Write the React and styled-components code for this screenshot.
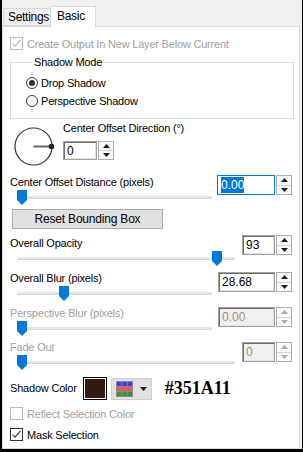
import styled, { createGlobalStyle } from 'styled-components';

const GlobalStyle = createGlobalStyle`
  html, body {
    margin: 0;
    padding: 0;
    background: #fff;
  }
  body {
    font-family: "Liberation Sans", Arial, sans-serif;
    font-size: 11px;
    letter-spacing: -0.2px;
    color: #000;
  }
  * {
    box-sizing: border-box;
  }
`;

const Frame = styled.div`
  width: 303px;
  height: 452px;
  background: #f0f0f0;
  border-left: 2px solid #000;
  border-right: 1px solid #000;
  border-bottom: 3px solid #000;
  display: flex;
  flex-direction: column;
`;

const TabStrip = styled.div`
  height: 26px;
  display: flex;
  align-items: flex-end;
  padding-left: 1px;
  position: relative;
  z-index: 1;
`;

const Tab = styled.div`
  width: ${(p) => (p.active ? 46 : 48)}px;
  height: ${(p) => (p.active ? 21 : 18)}px;
  margin-left: ${(p) => (p.active ? '-1px' : '0')};
  margin-bottom: ${(p) => (p.active ? '-1px' : '0')};
  padding-left: ${(p) => (p.active ? 6 : 4)}px;
  padding-bottom: ${(p) => (p.active ? 3 : 1)}px;
  background: ${(p) => (p.active ? '#fff' : '#f0f0f0')};
  border: 1px solid #d9d9d9;
  border-bottom: ${(p) => (p.active ? 'none' : '1px solid #d9d9d9')};
  display: flex;
  align-items: center;
  font-size: 12px;
  letter-spacing: -0.3px;
`;

const Panel = styled.div`
  flex: 1;
  margin-right: 2px;
  background: #fff;
  border: 1px solid #d9d9d9;
  padding: 10px 7px 0 7px;
  display: flex;
  flex-direction: column;
`;

const CheckRow = styled.label`
  display: flex;
  align-items: center;
  gap: 4px;
  height: 13px;
  margin-top: ${(p) => p.mt || 0}px;
  color: ${(p) => (p.disabled ? '#a0a0a0' : '#000')};
`;

const Box = styled.span`
  width: 13px;
  height: 13px;
  border: 1px solid ${(p) => (p.disabled ? '#bcbcbc' : '#333')};
  background: #fff;
  display: flex;
  align-items: center;
  justify-content: center;
`;

const Checkbox = ({ checked, disabled }) => (
  <Box disabled={disabled}>
    {checked && (
      <svg width="11" height="11" viewBox="0 0 11 11">
        <path
          d="M1.5 5.5 L4 8.2 L9.5 1.8"
          fill="none"
          stroke={disabled ? '#b4b4b4' : '#333'}
          strokeWidth="1.1"
        />
      </svg>
    )}
  </Box>
);

const Group = styled.fieldset`
  margin: 5px 0 0 0;
  width: 284px;
  padding: 4px 0 8px 15px;
  border: 1px solid #dcdcdc;
  border-radius: 0;
`;

const Legend = styled.legend`
  margin-left: 6px;
  padding: 0 2px;
  line-height: 15px;
`;

const RadioRow = styled.label`
  display: flex;
  align-items: center;
  gap: 3px;
  height: 18px;
`;

const RadioCircle = styled.span`
  width: 12px;
  height: 12px;
  border-radius: 50%;
  border: 1px solid #333;
  background: #fff;
  display: flex;
  align-items: center;
  justify-content: center;

  &::after {
    content: '';
    display: ${(p) => (p.checked ? 'block' : 'none')};
    width: 6px;
    height: 6px;
    border-radius: 50%;
    background: #333;
  }
`;

const DirectionRow = styled.div`
  display: flex;
  align-items: flex-start;
  margin-top: 2px;
`;

const Dial = styled.svg`
  margin: 6px 0 0 4px;
  flex-shrink: 0;
`;

const DirectionControls = styled.div`
  margin-left: 8px;
  display: flex;
  flex-direction: column;
  gap: 5px;
  padding-left: 1px;
`;

const Label = styled.div`
  line-height: 15px;
  white-space: nowrap;
  color: ${(p) => (p.disabled ? '#a0a0a0' : '#000')};
`;

const SpinWrap = styled.div`
  display: flex;
  height: ${(p) => p.h || 20}px;
  margin-top: ${(p) => p.dy || 0}px;
`;

const SpinField = styled.div`
  width: ${(p) => p.w}px;
  border: 1px solid ${(p) => (p.focused ? '#0078d7' : '#a0a0a0')};
  box-shadow: ${(p) => (p.focused ? 'none' : 'inset 1px 1px 0 #6d6d6d, inset -1px -1px 0 #e3e3e3')};
  background: ${(p) => (p.disabled ? '#f0f0f0' : '#fff')};
  color: ${(p) => (p.disabled ? '#9c8f84' : '#000')};
  padding: 0 0 0 3px;
  font-size: 12px;
  letter-spacing: 0;
  display: flex;
  align-items: center;
`;

const Selected = styled.span`
  background: #0078d7;
  color: #fff;
  padding: 1px 0;
`;

const SpinButtons = styled.div`
  width: 16px;
  margin-left: 1px;
  display: flex;
  flex-direction: column;
  border: 1px solid #adadad;
  background: #fafafa;
`;

const SpinButton = styled.div`
  flex: 1;
  display: flex;
  align-items: center;
  justify-content: center;

  & + & {
    border-top: 1px solid #d4d4d4;
  }
`;

const Arrow = ({ up, color }) => (
  <svg width="7" height="4" viewBox="0 0 7 4">
    <path d={up ? 'M0 4 L3.5 0 L7 4 Z' : 'M0 0 L3.5 4 L7 0 Z'} fill={color} />
  </svg>
);

const Spinner = ({ value, w, h, dy, focused, disabled }) => {
  const arrow = disabled ? '#a8a8a8' : '#1a1a1a';
  return (
    <SpinWrap h={h} dy={dy}>
      <SpinField w={w} focused={focused} disabled={disabled}>
        {focused ? <Selected>{value}</Selected> : value}
      </SpinField>
      <SpinButtons>
        <SpinButton>
          <Arrow up color={arrow} />
        </SpinButton>
        <SpinButton>
          <Arrow color={arrow} />
        </SpinButton>
      </SpinButtons>
    </SpinWrap>
  );
};

const SliderBlock = styled.div`
  display: flex;
  justify-content: space-between;
  align-items: flex-start;
  margin-top: ${(p) => p.mt}px;
`;

const SliderSide = styled.div`
  display: flex;
  flex-direction: column;
`;

const Track = styled.div`
  position: relative;
  width: ${(p) => p.w}px;
  height: 3px;
  margin: 6px 0 0 7px;
  background: #e6e6e6;
  border-bottom: 1px solid #d6d6d6;
`;

const Thumb = styled.div`
  position: absolute;
  top: -6px;
  width: 10px;
  height: 15px;
  background: #0078d7;
  clip-path: polygon(0 0, 100% 0, 100% 66%, 50% 100%, 0 66%);
`;

const Slider = ({ label, trackW, pos, spinW, value, dy, mt, focused, disabled }) => (
  <SliderBlock mt={mt}>
    <SliderSide>
      <Label disabled={disabled}>{label}</Label>
      <Track w={trackW}>
        <Thumb style={{ left: pos }} />
      </Track>
    </SliderSide>
    <Spinner value={value} w={spinW} dy={dy} focused={focused} disabled={disabled} />
  </SliderBlock>
);

const ResetButton = styled.button`
  margin: 10px 0 0 2px;
  width: 151px;
  height: 20px;
  background: #e1e1e1;
  border: 1px solid #adadad;
  font-family: inherit;
  font-size: 12px;
  letter-spacing: -0.2px;
  color: #000;
  padding: 0;
`;

const ColorRow = styled.div`
  display: flex;
  align-items: center;
  margin-top: 13px;
  height: 23px;
`;

const Swatch = styled.div`
  width: 24px;
  height: 23px;
  margin-left: 6px;
  border: 1px solid #000;
  box-shadow: inset 0 0 0 1px #fff;
  background: ${(p) => p.color};
`;

const PaletteButton = styled.div`
  width: 41px;
  height: 22px;
  margin-left: 4px;
  background: #e1e1e1;
  border: 1px solid #cfcfcf;
  display: flex;
  align-items: center;
  padding-left: 4px;
  gap: 7px;
`;

const HexText = styled.div`
  margin-left: 13px;
  font-family: "Liberation Serif", "Times New Roman", serif;
  font-weight: bold;
  font-size: 18px;
  letter-spacing: 0;
`;

const PaletteIcon = () => {
  const rows = ['#3b3bff', '#ff4d4d', '#2e9a3a'];
  return (
    <svg width="17" height="16" viewBox="0 0 17 16">
      <rect x="0" y="0" width="17" height="16" fill="#8a8a8a" />
      {rows.map((c, r) =>
        [0, 1, 2].map((col) => (
          <rect key={`${r}-${col}`} x={1 + col * 5.34} y={1 + r * 5} width="4.3" height="4" fill={c} />
        ))
      )}
    </svg>
  );
};

export default function App() {
  return (
    <>
      <GlobalStyle />
      <Frame>
        <TabStrip>
          <Tab>Settings</Tab>
          <Tab active>Basic</Tab>
        </TabStrip>
        <Panel>
          <CheckRow disabled>
            <Checkbox checked disabled />
            Create Output In New Layer Below Current
          </CheckRow>

          <Group>
            <Legend>Shadow Mode</Legend>
            <RadioRow>
              <RadioCircle checked />
              Drop Shadow
            </RadioRow>
            <RadioRow>
              <RadioCircle />
              Perspective Shadow
            </RadioRow>
          </Group>

          <DirectionRow>
            <Dial width="40" height="40" viewBox="0 0 40 40">
              <circle cx="19.5" cy="19.5" r="18.5" fill="none" stroke="#333" strokeWidth="1.2" />
              <line x1="19.5" y1="19.5" x2="37" y2="19.5" stroke="#666" strokeWidth="2" />
              <circle cx="37.5" cy="19.5" r="2.8" fill="#222" />
            </Dial>
            <DirectionControls>
              <Label>Center Offset Direction (°)</Label>
              <Spinner value="0" w={34} h={19} />
            </DirectionControls>
          </DirectionRow>

          <Slider
            mt={8}
            label="Center Offset Distance (pixels)"
            trackW={195}
            pos={0}
            spinW={58}
            value="0.00"
            h={21}
            focused
          />

          <ResetButton>Reset Bounding Box</ResetButton>

          <Slider mt={7} label="Overall Opacity" trackW={218} pos={195} spinW={33} value="93" dy={-1} />
          <Slider mt={11} label="Overall Blur (pixels)" trackW={195} pos={42} spinW={57} value="28.68" dy={1} />
          <Slider
            mt={11}
            label="Perspective Blur (pixels)"
            trackW={195}
            pos={0}
            spinW={57}
            value="0.00"
            dy={1}
            disabled
          />
          <Slider mt={10} label="Fade Out" trackW={218} pos={0} spinW={33} value="0" dy={2} disabled />

          <ColorRow>
            <Label>Shadow Color</Label>
            <Swatch color="#351A11" />
            <PaletteButton>
              <PaletteIcon />
              <Arrow color="#111" />
            </PaletteButton>
            <HexText>#351A11</HexText>
          </ColorRow>

          <CheckRow disabled mt={7}>
            <Checkbox disabled />
            Reflect Selection Color
          </CheckRow>
          <CheckRow mt={8}>
            <Checkbox checked />
            Mask Selection
          </CheckRow>
        </Panel>
      </Frame>
    </>
  );
}
